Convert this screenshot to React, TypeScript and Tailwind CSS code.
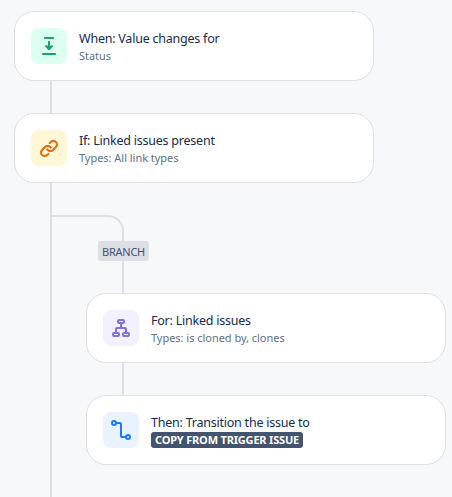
import React from "react";

interface RuleCardProps {
  icon: React.ReactNode;
  iconClass: string;
  title: string;
  children: React.ReactNode;
}

const RuleCard: React.FC<RuleCardProps> = ({ icon, iconClass, title, children }) => {
  return (
    <div className="flex h-[70px] w-[360px] items-center gap-3 rounded-[20px] border border-[#dcdfe4] bg-white px-4">
      <div className={`flex size-9 shrink-0 items-center justify-center rounded-lg ${iconClass}`}>
        {icon}
      </div>
      <div className="flex flex-col items-start pt-[3px] whitespace-nowrap">
        <h2 className="-mb-px text-[12.5px] leading-[18px] tracking-[-0.23px] text-[#172b4d]">{title}</h2>
        {children}
      </div>
    </div>
  );
};

const Subtitle = ({ children }: { children: React.ReactNode }) => (
  <p className="text-[11px] leading-[18px] tracking-[-0.03px] text-[#626f86]">{children}</p>
);

const FieldChangeIcon = () => (
  <svg width="24" height="24" viewBox="0 0 24 24" fill="currentColor">
    <rect x="7" y="3" width="10" height="2" rx="0.7" />
    <path d="M11 7h2v4.500h2.500c.8 0 1 .6.5 1.100l-3.300 3.400a1 1 0 0 1-1.400 0L8 12.600C7.500 12.100 7.700 11.500 8.500 11.500H11z" />
    <rect x="5" y="19" width="14" height="2" rx="0.7" />
  </svg>
);

const LinkIcon = () => (
  <svg width="24" height="24" viewBox="0 0 24 24" fill="currentColor">
    <path d="M12.856 5.457l-.937.92a1.002 1.002 0 000 1.437 1.047 1.047 0 001.463 0l.984-.966c.967-.95 2.542-1.135 3.602-.288a2.54 2.54 0 01.203 3.81l-2.903 2.852a2.646 2.646 0 01-3.696 0l-1.11-1.09L9 13.57l1.108 1.089c1.822 1.788 4.802 1.788 6.622 0l2.905-2.852a4.558 4.558 0 00-.357-6.82c-1.893-1.517-4.695-1.226-6.422.47" />
    <path d="M11.144 19.543l.937-.92a1.002 1.002 0 000-1.437 1.047 1.047 0 00-1.462 0l-.985.966c-.967.95-2.542 1.135-3.602.288a2.54 2.54 0 01-.203-3.81l2.903-2.852a2.646 2.646 0 013.696 0l1.11 1.09L15 11.43l-1.108-1.089c-1.822-1.788-4.802-1.788-6.622 0l-2.905 2.852a4.558 4.558 0 00.357 6.82c1.893 1.517 4.695 1.226 6.422-.47" />
  </svg>
);

const HierarchyIcon = () => (
  <svg width="24" height="24" viewBox="0 0 24 24" fill="none" stroke="currentColor" strokeWidth="2">
    <rect x="9" y="4" width="6" height="3" rx="1" />
    <rect x="4" y="17" width="6" height="3" rx="1" />
    <rect x="14" y="17" width="6" height="3" rx="1" />
    <path d="M12 7v5M7 17v-4a1 1 0 0 1 1-1h8a1 1 0 0 1 1 1v4" />
  </svg>
);

const TransitionIcon = () => (
  <svg width="24" height="24" viewBox="0 0 24 24" fill="none" stroke="currentColor" strokeWidth="2">
    <circle cx="5" cy="5" r="2" />
    <circle cx="19" cy="19" r="2" />
    <path d="M7 5h4a1 1 0 0 1 1 1v12a1 1 0 0 0 1 1h4" />
  </svg>
);

const App: React.FC = () => {
  return (
    <div className="h-[497px] w-[452px] overflow-hidden bg-[#f7f8f9] pt-[11px] pl-3.5 font-['Noto_Sans',sans-serif]">
      <RuleCard icon={<FieldChangeIcon />} iconClass="bg-[#dcfff1] text-[#22a06b]" title="When: Value changes for">
        <Subtitle>Status</Subtitle>
      </RuleCard>

      <div className="ml-9 h-8 w-0.5 bg-[#dcdfe4]" />

      <RuleCard icon={<LinkIcon />} iconClass="bg-[#fff7d6] text-[#e56910]" title="If: Linked issues present">
        <Subtitle>Types: All link types</Subtitle>
      </RuleCard>

      {/* Branch */}
      <div className="ml-9 h-[314px] border-l-2 border-[#dcdfe4] pt-8">
        <div className="h-[26px] w-[72px] rounded-tr-[16px] border-t-2 border-r-2 border-[#dcdfe4]" />
        <div className="ml-[46px] flex h-5 w-[51px] items-center justify-center rounded-[3px] bg-[#dcdfe4] pt-0.5 text-[11px] tracking-[-0.25px] text-[#44546f]">
          BRANCH
        </div>
        <div className="ml-[70px] h-8 w-0.5 bg-[#dcdfe4]" />
        <div className="ml-[34px]">
          <RuleCard icon={<HierarchyIcon />} iconClass="bg-[#f3f0ff] text-[#8270db]" title="For: Linked issues">
            <Subtitle>Types: is cloned by, clones</Subtitle>
          </RuleCard>
          <div className="ml-9 h-8 w-0.5 bg-[#dcdfe4]" />
          <RuleCard icon={<TransitionIcon />} iconClass="bg-[#e9f2ff] text-[#1d7afc]" title="Then: Transition the issue to">
            <span className="my-px h-4 rounded-[3px] bg-[#44546f] px-1 text-[11px] leading-4 font-bold tracking-[-0.18px] text-white">
              COPY FROM TRIGGER ISSUE
            </span>
          </RuleCard>
        </div>
      </div>
    </div>
  );
};

export default App;
